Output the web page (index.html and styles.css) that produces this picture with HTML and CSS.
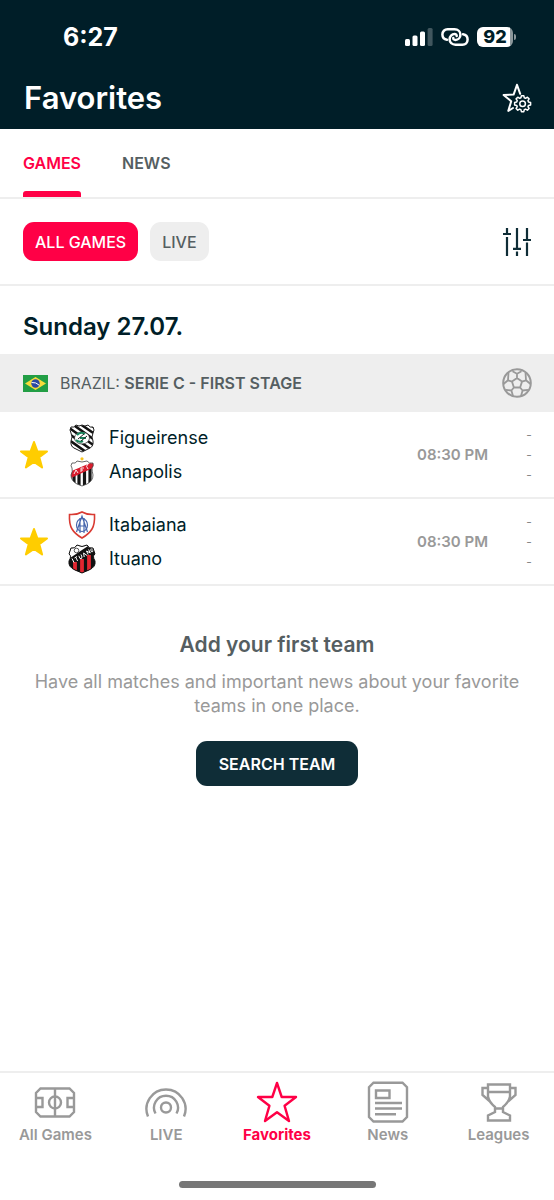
FILE: index.html
```html
<!DOCTYPE html>
<html lang="en">
<head>
<meta charset="utf-8">
<meta name="viewport" content="width=device-width, initial-scale=1">
<title>Favorites</title>
<link rel="stylesheet" href="styles.css">
</head>
<body>
<div class="app">
  <header class="top">
    <div class="status">
      <span class="clock">6:27</span>
      <div class="status-icons">
        <svg width="28" height="20" viewBox="0 0 28 20" fill="#fff" aria-hidden="true">
          <rect x="0" y="12" width="5" height="7" rx="1.5"/>
          <rect x="7.5" y="8.500" width="5" height="10.500" rx="1.5"/>
          <rect x="15" y="4.500" width="5" height="14.500" rx="1.5"/>
          <rect x="22.600" y="1" width="5" height="18" rx="1.5" opacity=".25"/>
        </svg>
        <svg width="28" height="20" viewBox="0 0 28 20" fill="none" stroke="#fff" stroke-width="2.500" stroke-linecap="round" aria-hidden="true">
          <path d="M6 12.800C3.200 12.400 1.400 10.200 1.400 7.600C1.400 4.400 3.600 2.300 6.600 2.300H13.500C17 2.300 19.400 4.500 19.400 7.700C19.400 10.800 17.200 12.900 14.400 12.900C13 12.900 12.100 12.200 12.300 11"/>
          <path d="M22 7.200C24.800 7.600 26.600 9.800 26.600 12.400C26.600 15.600 24.400 17.700 21.400 17.700H14.500C11 17.700 8.600 15.500 8.600 12.300C8.600 9.200 10.800 7.100 13.600 7.100C15 7.100 15.900 7.800 15.700 9"/>
        </svg>
        <div class="battery"><span class="battery-level">92</span></div>
      </div>
    </div>
    <div class="title-bar">
      <h1>Favorites</h1>
      <button class="icon-button" type="button" aria-label="Favorite settings">
        <svg width="32" height="32" viewBox="0 0 32 32" fill="none" stroke="#fff" stroke-width="2" stroke-linejoin="round" stroke-linecap="round" aria-hidden="true">
          <path d="M19.200 11.800L16 2.800L12.600 12.600L2.600 13L10.200 19.200L7.300 28.900L12 26"/>
          <g transform="translate(21.600 21.700)" stroke-width="1.500">
            <path d="M-1.700-5.900L-1.200-8H1.200L1.700-5.900L2.970-5.370L4.810-6.500L6.500-4.810L5.370-2.970L5.900-1.700L8-1.200V1.200L5.900 1.700L5.370 2.970L6.500 4.810L4.810 6.500L2.970 5.370L1.700 5.900L1.200 8H-1.200L-1.700 5.900L-2.970 5.370L-4.810 6.500L-6.500 4.810L-5.370 2.970L-5.900 1.700L-8 1.200V-1.200L-5.900-1.700L-5.370-2.970L-6.500-4.810L-4.810-6.500L-2.970-5.370Z"/>
            <circle r="2.800"/>
          </g>
        </svg>
      </button>
    </div>
  </header>

  <nav class="tabs" aria-label="Sections">
    <a class="tab tab-active" href="#games" aria-current="page">GAMES</a>
    <a class="tab" href="#news">NEWS</a>
  </nav>

  <div class="filters">
    <button class="chip chip-active" type="button">ALL GAMES</button>
    <button class="chip" type="button">LIVE</button>
    <button class="icon-button push" type="button" aria-label="Filter">
      <svg width="32" height="32" viewBox="0 0 32 32" fill="none" stroke="#0f2d37" stroke-width="2.200" aria-hidden="true">
        <path d="M6 2V8M2 8H10M6 11V30M16 2V22M12 22.800H20M16 25.500V30M26 2V14M22 14H30M26 16.500V30"/>
      </svg>
    </button>
  </div>

  <main>
    <h2 class="date">Sunday 27.07.</h2>

    <div class="league">
      <svg class="flag" width="25" height="17" viewBox="0 0 25 17" aria-hidden="true">
        <rect width="25" height="17" fill="#229e45"/>
        <path d="M12.500 2L23 8.500L12.500 15L2 8.500Z" fill="#f8dc3b"/>
        <circle cx="12.500" cy="8.500" r="4.200" fill="#2b49a3"/>
        <path d="M8.600 7.500Q13 7 16.200 10.200" stroke="#fff" fill="none"/>
      </svg>
      <h3 class="league-name">BRAZIL: <b>SERIE C - FIRST STAGE</b></h3>
      <svg class="push" width="32" height="32" viewBox="0 0 32 32" fill="none" stroke="#999" stroke-width="1.800" stroke-linejoin="round" aria-hidden="true">
        <circle cx="16" cy="16" r="13.800" stroke-width="2"/>
        <path d="M16 11L21 14.600L19.100 20.500H12.900L11 14.600ZM16 11V6.800M21 14.600L25 13.300M19.100 20.500L21.600 23.500M12.900 20.500L10.400 23.500M11 14.600L7 13.300M16 6.800L11.500 4.200M16 6.800L20.500 4.200M7.500 5.500L7 13.300L2.500 17M24.500 5.500L25 13.300L29.500 17M27 22.800L21.600 23.500L20 29M5 22.800L10.400 23.500L12 29"/>
      </svg>
    </div>

    <article class="match">
      <button class="icon-button star" type="button" aria-label="Remove Figueirense - Anapolis from favorites">
        <svg width="30" height="30" viewBox="0 0 30 30" fill="#ffcd00" stroke="#ffcd00" stroke-width="2" stroke-linejoin="round" aria-hidden="true">
          <path d="M15 2L18.300 11.200L28 11.400L20.300 17.300L23.100 27.500L15 21.900L6.900 27.500L9.700 17.300L2 11.400L11.700 11.200Z"/>
        </svg>
      </button>
      <div class="teams">
        <div class="team">
          <svg width="30" height="30" viewBox="0 0 30 30" aria-hidden="true">
            <defs>
              <clipPath id="fig"><path d="M4 4Q7 5 9 2Q12 4 15 2Q18 4 21 2Q23 5 26 4Q28 7 26 10Q24 14 26 18Q27 24 21 26L15 29L9 26Q3 24 4 18Q6 14 4 10Q2 7 4 4Z"/></clipPath>
            </defs>
            <g clip-path="url(#fig)">
              <rect width="30" height="30" fill="#fff"/>
              <path d="M-2-4L32 20M-2 2L32 26M-2 8L32 32M-2 14L26 34M-2 20L20 36M6-4L32 14M15-4L32 8" stroke="#111" stroke-width="2.600"/>
              <ellipse cx="15" cy="15" rx="7.500" ry="6" fill="#fff" stroke="#222" stroke-width=".7"/>
              <path d="M10 12Q14 8 18 11M9 17Q12 20 16 18M13 15H19" stroke="#16855b" stroke-width="2" fill="none"/>
              <path d="M11 16L17 11M14 18L20 13" stroke="#222"/>
            </g>
            <path d="M4 4Q7 5 9 2Q12 4 15 2Q18 4 21 2Q23 5 26 4Q28 7 26 10Q24 14 26 18Q27 24 21 26L15 29L9 26Q3 24 4 18Q6 14 4 10Q2 7 4 4Z" fill="none" stroke="#222"/>
          </svg>
          <span>Figueirense</span>
        </div>
        <div class="team">
          <svg width="30" height="30" viewBox="0 0 30 30" aria-hidden="true">
            <defs>
              <clipPath id="ana"><path d="M5 6Q9 7 10 4Q15 6 20 4Q22 7 26 6Q27 9 25 11Q25 14 26 18Q26 24 20 27L15 29L10 27Q4 24 4 18Q6 14 5 11Q3 9 5 6Z"/></clipPath>
            </defs>
            <circle cx="15" cy="1.800" r="1.600" fill="#f9c51c"/>
            <g clip-path="url(#ana)">
              <rect width="30" height="30" fill="#fff"/>
              <path d="M7 15V30M12 13V30M17.500 11V30M23 9V30" stroke="#161616" stroke-width="3.200"/>
              <path d="M2 15L28 4V10L2 22Z" fill="#d91d2d"/>
              <path d="M7 17L9 13L11 16M14 15V11H17M16 13H14M21 7Q18 9 21 12" stroke="#fff" stroke-width=".9" fill="none"/>
            </g>
            <path d="M5 6Q9 7 10 4Q15 6 20 4Q22 7 26 6Q27 9 25 11Q25 14 26 18Q26 24 20 27L15 29L10 27Q4 24 4 18Q6 14 5 11Q3 9 5 6Z" fill="none" stroke="#444" stroke-width=".8"/>
          </svg>
          <span>Anapolis</span>
        </div>
      </div>
      <time class="kickoff" datetime="20:30">08:30 PM</time>
      <div class="scores"><span>-</span><span>-</span><span>-</span></div>
    </article>

    <article class="match">
      <button class="icon-button star" type="button" aria-label="Remove Itabaiana - Ituano from favorites">
        <svg width="30" height="30" viewBox="0 0 30 30" fill="#ffcd00" stroke="#ffcd00" stroke-width="2" stroke-linejoin="round" aria-hidden="true">
          <path d="M15 2L18.300 11.200L28 11.400L20.300 17.300L23.100 27.500L15 21.900L6.900 27.500L9.700 17.300L2 11.400L11.700 11.200Z"/>
        </svg>
      </button>
      <div class="teams">
        <div class="team">
          <svg width="30" height="30" viewBox="0 0 30 30" fill="none" aria-hidden="true">
            <path d="M15 2Q20 5 27.500 4.500Q28 14 25 19Q22 24 15 28Q8 24 5 19Q2 14 2.500 4.500Q10 5 15 2Z" fill="#fff" stroke="#d93b33" stroke-width="1.600"/>
            <ellipse cx="15" cy="15" rx="5.500" ry="6.500" stroke="#4766ad" stroke-width="1.200"/>
            <path d="M9.500 22L15 6L20.500 22M11.500 16H18.500M13 8V23M17 8V23" stroke="#4766ad" stroke-width="1.200"/>
          </svg>
          <span>Itabaiana</span>
        </div>
        <div class="team">
          <svg width="30" height="30" viewBox="0 0 30 30" aria-hidden="true">
            <defs>
              <clipPath id="itu"><path d="M4 4Q8 5 10 1Q15 4 20 1Q22 5 26 4L28 10Q25 12 28 17Q29 23 22 26L15 29L8 26Q1 23 2 17Q5 12 2 10Z"/></clipPath>
            </defs>
            <g clip-path="url(#itu)">
              <rect width="30" height="30" fill="#111"/>
              <path d="M8 18V30M15 15V30M22 11V30" stroke="#e32630" stroke-width="3.800"/>
              <path d="M0 0H24L3 14Z" fill="#fff"/>
              <circle cx="9.500" cy="6.500" r="2.300" fill="none" stroke="#444" stroke-width=".9"/>
              <path d="M5 14.500L7 18.500M7.500 14L10 12.500M8.800 13.300L10.600 17M11.800 11.800L13 14.500Q14.800 15.500 15 13L14 10.500M17.200 13L16.600 9L20 11.500M21.200 10.500L19.500 7L23.300 9L21.600 5.500" fill="none" stroke="#fff" stroke-width="1"/>
              <ellipse cx="25" cy="6" rx="1.100" ry="1.900" fill="none" stroke="#fff" stroke-width="1"/>
            </g>
            <path d="M4 4Q8 5 10 1Q15 4 20 1Q22 5 26 4L28 10Q25 12 28 17Q29 23 22 26L15 29L8 26Q1 23 2 17Q5 12 2 10Z" fill="none" stroke="#111"/>
          </svg>
          <span>Ituano</span>
        </div>
      </div>
      <time class="kickoff" datetime="20:30">08:30 PM</time>
      <div class="scores"><span>-</span><span>-</span><span>-</span></div>
    </article>

    <section class="empty">
      <h2>Add your first team</h2>
      <p>Have all matches and important news about your favorite teams in one place.</p>
      <button class="primary" type="button">SEARCH TEAM</button>
    </section>
  </main>

  <footer class="bottom">
    <nav class="bottom-nav" aria-label="Main">
      <a class="nav-item" href="#all">
        <svg viewBox="0 0 42 42" aria-hidden="true"><path d="M6.500 7.500H35.500L40 12V31L35.500 35.500H6.500L2 31V12ZM21 7.500V35.500M2 17H8.500V26H2M40 17H33.500V26H40"/><circle cx="21" cy="21.500" r="6"/></svg>
        All Games
      </a>
      <a class="nav-item" href="#live">
        <svg viewBox="0 0 42 42" aria-hidden="true"><circle cx="21" cy="26.500" r="5"/><path d="M10.500 32.500A12 12 0 1 1 31.500 32.500M3 35.500A19.500 19.500 0 1 1 39 35.500"/></svg>
        LIVE
      </a>
      <a class="nav-item nav-active" href="#favorites" aria-current="page">
        <svg viewBox="0 0 42 42" stroke-linejoin="round" aria-hidden="true"><path d="M21 2L25.700 16H40L28.600 24.800L33 40L21 31.200L9 40L13.400 24.800L2 16H16.300Z"/></svg>
        Favorites
      </a>
      <a class="nav-item" href="#news">
        <svg viewBox="0 0 42 42" aria-hidden="true"><path d="M6.500 1.700H35.500L40 6.200V36L35.500 40.500H6.500L2 36V6.200ZM9 9.500H22.500V17H9ZM8 22H35M8 27.500H35M8 33.200H29"/></svg>
        News
      </a>
      <a class="nav-item" href="#leagues">
        <svg viewBox="0 0 42 42" aria-hidden="true"><path d="M10 3.500H32V15.500Q31 21 25 26V31L32 34.500V39.500H10V34.500L17 31V26Q11 21 10 15.500ZM10 11H32M10 7H4.500V14L12 20.500M32 7H37.500V14L30 20.500M17 27.500H25"/></svg>
        Leagues
      </a>
    </nav>
    <div class="home-indicator"></div>
  </footer>
</div>
</body>
</html>
```

FILE: styles.css
```css
* {
  box-sizing: border-box;
}

body {
  margin: 0;
  background: #fff;
  color: #001e28;
  font-family: Inter, Roboto, "Liberation Sans", sans-serif;
  font-size: 18px;
}

h1, h2, h3, p {
  margin: 0;
}

button {
  border: 0;
  font: inherit;
  cursor: pointer;
}

a {
  color: inherit;
  text-decoration: none;
}

svg {
  display: block;
  flex: none;
}

.app {
  display: flex;
  flex-direction: column;
  min-height: 100vh;
}

.top {
  background: #001e28;
  color: #fff;
  padding-bottom: 8px;
}

.status {
  display: flex;
  align-items: center;
  justify-content: space-between;
  height: 74px;
  padding: 0 41px 0 63px;
}

.clock {
  font-size: 25px;
  font-weight: 700;
}

.status-icons {
  display: flex;
  align-items: center;
  gap: 8px;
}

.battery {
  position: relative;
  width: 36px;
  height: 20px;
  border-radius: 6px;
  background: linear-gradient(90deg, #fff 92%, #8b979b 92%);
  color: #001e28;
  text-align: center;
}

.battery::after {
  content: "";
  position: absolute;
  top: 7px;
  right: -3px;
  width: 2px;
  height: 6px;
  border-radius: 0 2px 2px 0;
  background: #8b979b;
}

.battery-level {
  display: block;
  font-size: 18px;
  font-weight: 800;
  line-height: 20px;
}

.title-bar {
  display: flex;
  align-items: center;
  justify-content: space-between;
  height: 47px;
  padding: 0 21px 0 24px;
}

h1 {
  font-size: 31px;
  font-weight: 600;
}

.icon-button {
  padding: 0;
  background: none;
}

.push {
  margin-left: auto;
}

.tabs {
  display: flex;
  gap: 41px;
  height: 70px;
  padding: 0 23px;
  border-bottom: 2px solid #eee;
}

.tab {
  display: flex;
  align-items: center;
  border-top: 6px solid transparent;
  border-bottom: 6px solid transparent;
  color: #555e61;
  font-size: 16px;
  font-weight: 600;
}

.tab-active {
  position: relative;
  color: #ff0046;
}

.tab-active::after {
  content: "";
  position: absolute;
  right: 0;
  bottom: -6px;
  left: 0;
  height: 6px;
  border-radius: 3px 3px 0 0;
  background: #ff0046;
}

.filters {
  display: flex;
  align-items: center;
  gap: 12px;
  padding: 23px 21px 23px 23px;
  border-bottom: 2px solid #eee;
}

.chip {
  height: 39px;
  padding: 0 12px;
  border-radius: 11px;
  background: #eee;
  color: #555e61;
  font-size: 16px;
  font-weight: 500;
}

.chip-active {
  background: #ff0046;
  color: #fff;
}

.date {
  padding: 26px 23px 13px;
  font-size: 24px;
  font-weight: 600;
  line-height: 29px;
}

.league {
  display: flex;
  align-items: center;
  gap: 12px;
  height: 58px;
  padding: 0 21px 0 23px;
  background: #eee;
  color: #555e61;
}

.league-name {
  font-size: 16px;
  font-weight: 400;
}

.league-name b {
  font-weight: 600;
}

.match {
  display: flex;
  align-items: center;
  height: 87px;
  padding: 0 20px 0 19px;
  border-bottom: 2px solid #eee;
}

.teams {
  display: grid;
  gap: 4px;
  margin-left: 18px;
}

.team {
  display: flex;
  align-items: center;
  gap: 12px;
  line-height: 24px;
}

.kickoff {
  margin-left: auto;
  color: #999;
  font-size: 15px;
  font-weight: 600;
}

.scores {
  display: flex;
  flex-direction: column;
  width: 10px;
  margin-left: 36px;
  color: #888;
  font-size: 12px;
  line-height: 20px;
  text-align: center;
}

.empty {
  display: flex;
  flex-direction: column;
  align-items: center;
  padding: 46px 24px;
  text-align: center;
}

.empty h2 {
  color: #555e61;
  font-size: 21px;
  font-weight: 600;
  line-height: 26px;
}

.empty p {
  margin: 12px 0 23px;
  color: #999;
  line-height: 24px;
}

.primary {
  height: 45px;
  padding: 0 23px;
  border-radius: 11px;
  background: #0f2d37;
  color: #fff;
  font-size: 16px;
  font-weight: 600;
}

.bottom {
  margin-top: auto;
  padding-bottom: 12px;
  border-top: 2px solid #eee;
}

.bottom-nav {
  display: grid;
  grid-template-columns: repeat(5, 1fr);
  padding-top: 8px;
}

.nav-item {
  display: flex;
  flex-direction: column;
  align-items: center;
  gap: 2px;
  color: #999;
  font-size: 15px;
  font-weight: 600;
  line-height: 20px;
}

.nav-item svg {
  width: 42px;
  height: 42px;
  fill: none;
  stroke: currentColor;
  stroke-width: 2.4px;
}

.nav-active {
  color: #ff0046;
  font-weight: 700;
}

.home-indicator {
  width: 197px;
  height: 7px;
  margin: 36px auto 0;
  border-radius: 4px;
  background: #777;
}
```
